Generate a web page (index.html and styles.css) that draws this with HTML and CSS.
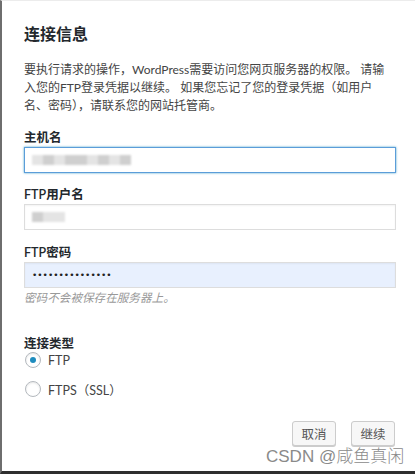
FILE: index.html
```html
<!DOCTYPE html>
<html lang="zh-CN">
<head>
<meta charset="utf-8">
<title>连接信息</title>
<link rel="stylesheet" href="styles.css">
</head>
<body>
<div class="dialog">
  <h2 class="title">连接信息</h2>
  <p class="intro">要执行请求的操作，WordPress需要访问您网页服务器的权限。 请输<br>入您的FTP登录凭据以继续。 如果您忘记了您的登录凭据（如用户<br>名、密码），请联系您的网站托管商。</p>

  <label class="label l-host">主机名</label>
  <div class="input focused">
    <span class="blur"><i></i><i class="d"></i><i></i><i class="d"></i><i class="d"></i><i></i><i class="d"></i><i></i><i class="d"></i></span>
  </div>

  <label class="label l-user">FTP用户名</label>
  <div class="input">
    <span class="blur"><i class="d"></i><i></i><i></i></span>
  </div>

  <label class="label l-pass">FTP密码</label>
  <div class="input autofill"><span class="dots">•••••••••••••••</span></div>
  <p class="hint">密码不会被保存在服务器上。</p>

  <div class="type-label">连接类型</div>
  <div class="radio-row r1"><span class="radio checked"></span><span class="rtext">FTP</span></div>
  <div class="radio-row r2"><span class="radio"></span><span class="rtext">FTPS（SSL）</span></div>

  <div class="actions">
    <button class="btn">取消</button>
    <button class="btn">继续</button>
  </div>
  <div class="watermark">CSDN @咸鱼真闲</div>
</div>
</body>
</html>
```

FILE: styles.css
```css
html, body {
  margin: 0;
  padding: 0;
  background: #fff;
}
body {
  width: 415px;
  height: 474px;
  overflow: hidden;
  font-family: "Lato", "Noto Sans CJK SC", sans-serif;
  color: #444;
}
.dialog {
  position: relative;
  box-sizing: border-box;
  height: 474px;
  border-left: 2px solid #6e6e6e;
  border-top: 1px solid #ececec;
  border-bottom: 3px solid #2e2e2e;
  padding: 0 19px 0 22px;
}
.title {
  margin: 21px 0 0;
  font-size: 16px;
  line-height: 22px;
  font-weight: 700;
  color: #23282d;
  font-family: "Noto Sans CJK SC", sans-serif;
}
.intro {
  margin: 17px 0 0;
  font-size: 12px;
  line-height: 18px;
  color: #444;
  white-space: nowrap;
}
.label {
  display: block;
  font-size: 12.5px;
  line-height: 18px;
  padding-top: 3px;
  font-weight: 600;
  color: #23282d;
}
.l-host { margin-top: 11px; }
.l-user { margin-top: 10px; }
.l-pass { margin-top: 11px; }
.input {
  box-sizing: border-box;
  height: 26px;
  width: 372px;
  border: 1px solid #ddd;
  background: #fff;
  box-shadow: inset 0 1px 2px rgba(0,0,0,0.05);
  display: flex;
  align-items: center;
  padding-left: 7px;
}
.focused {
  border-color: #5b9dd9;
  box-shadow: 0 0 2px rgba(30,140,190,0.8);
}
.autofill {
  background: #e8f0fe;
}
.blur {
  display: flex;
  height: 10px;
  filter: blur(1.2px);
}
.blur i {
  display: block;
  width: 11px;
  height: 10px;
  background: #e4e4e4;
}
.blur i.d { background: #cfcfcf; }
.dots {
  font-size: 9px;
  color: #222;
  font-family: "DejaVu Sans", sans-serif;
}
.hint {
  margin: 2px 0 0;
  font-size: 11.6px;
  line-height: 16px;
  font-style: italic;
  color: #999;
}
.type-label {
  margin-top: 30px;
  font-size: 12.5px;
  line-height: 16px;
  font-weight: 600;
  color: #23282d;
}
.radio-row {
  display: flex;
  align-items: center;
  height: 16px;
  font-size: 12.5px;
  color: #444;
}
.r1 { margin-top: 0; }
.r2 { margin-top: 13px; }
.radio {
  box-sizing: border-box;
  width: 16px;
  height: 16px;
  border: 1px solid #b4b9be;
  border-radius: 50%;
  background: #fff;
  box-shadow: inset 0 1px 2px rgba(0,0,0,0.1);
  display: flex;
  align-items: center;
  justify-content: center;
  margin-left: 1px;
}
.radio.checked::after {
  content: "";
  width: 6px;
  height: 6px;
  border-radius: 50%;
  background: #1e8cbe;
}
.rtext { margin-left: 7px; }
.actions {
  display: flex;
  justify-content: flex-end;
  gap: 15px;
  margin-top: 24px;
  padding-right: 1px;
}
.btn {
  box-sizing: border-box;
  width: 44px;
  height: 25px;
  padding: 0;
  border: 1px solid #ccc;
  border-radius: 3px;
  background: #f7f7f7;
  box-shadow: 0 1px 0 #ccc;
  font-family: "Noto Sans CJK SC", sans-serif;
  font-size: 12.5px;
  color: #555;
}
.watermark {
  position: absolute;
  left: 264px;
  top: 446px;
  font-family: "Liberation Sans", "Noto Sans CJK SC", sans-serif;
  font-size: 17px;
  line-height: 20px;
  color: #8a8a8a;
  font-weight: 300;
  white-space: nowrap;
}
```
